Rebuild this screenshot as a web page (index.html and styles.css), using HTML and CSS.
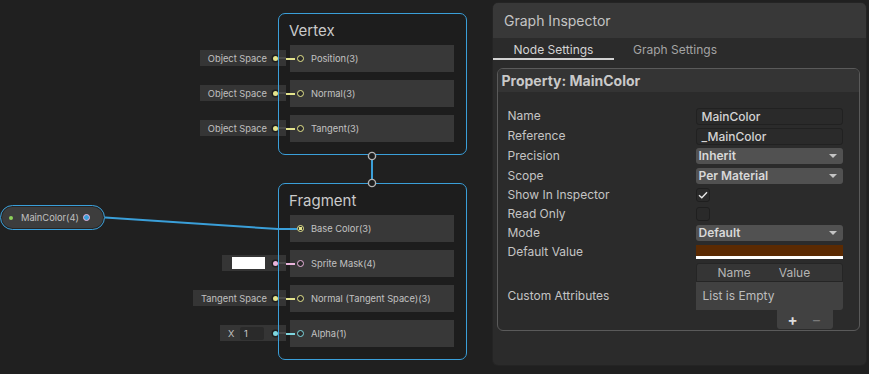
FILE: index.html
```html
<!DOCTYPE html>
<html lang="en">
<head>
    <meta charset="UTF-8">
    <meta name="viewport" content="width=device-width, initial-scale=1.0">
    <title>Shader Graph</title>
    <link rel="stylesheet" href="styles.css">
</head>
<body>
    <div class="graph">
        <!-- Property node -->
        <div class="prop-node">
            <span class="prop-dot"></span>
            <span class="prop-name">MainColor(4)</span>
            <span class="prop-port"></span>
        </div>

        <!-- Vertex block -->
        <div class="node node-vertex">
            <div class="node-title">Vertex</div>
            <div class="slot">
                <div class="input"><span>Object Space</span><i class="dot yellow"></i></div>
                <span class="wire yellow"></span>
                <span class="port yellow"></span>Position(3)
            </div>
            <div class="slot">
                <div class="input"><span>Object Space</span><i class="dot yellow"></i></div>
                <span class="wire yellow"></span>
                <span class="port yellow"></span>Normal(3)
            </div>
            <div class="slot">
                <div class="input"><span>Object Space</span><i class="dot yellow"></i></div>
                <span class="wire yellow"></span>
                <span class="port yellow"></span>Tangent(3)
            </div>
        </div>

        <!-- Fragment block -->
        <div class="node node-fragment">
            <div class="node-title">Fragment</div>
            <div class="slot">
                <span class="port yellow linked"></span>Base Color(3)
            </div>
            <div class="slot">
                <div class="input input-swatch"><span class="swatch"></span><i class="dot pink"></i></div>
                <span class="wire pink"></span>
                <span class="port pink"></span>Sprite Mask(4)
            </div>
            <div class="slot">
                <div class="input"><span>Tangent Space</span><i class="dot yellow"></i></div>
                <span class="wire yellow"></span>
                <span class="port yellow"></span>Normal (Tangent Space)(3)
            </div>
            <div class="slot">
                <div class="input input-float"><span class="axis">X</span><span class="num">1</span><i class="dot cyan"></i></div>
                <span class="wire cyan"></span>
                <span class="port cyan"></span>Alpha(1)
            </div>
        </div>

        <svg class="wires" width="493" height="374" viewBox="0 0 493 374">
            <path d="M105 217.5 L278 229 L297 229" fill="none" stroke="#3a9fd9" stroke-width="2"/>
            <line x1="372" y1="156" x2="372" y2="183" stroke="#3a9fd9" stroke-width="2"/>
            <circle cx="372" cy="156" r="3.6" fill="#1d1d1d" stroke="#b4b4b4" stroke-width="1.4"/>
            <circle cx="372" cy="183" r="3.6" fill="#1d1d1d" stroke="#b4b4b4" stroke-width="1.4"/>
        </svg>
    </div>

    <aside class="inspector">
        <div class="insp-title">Graph Inspector</div>
        <div class="tabs">
            <div class="tab active">Node Settings</div>
            <div class="tab">Graph Settings</div>
        </div>

        <section class="prop">
            <h2>Property: MainColor</h2>
            <div class="fields">
                <div class="row">
                    <label>Name</label>
                    <div class="text-field">MainColor</div>
                </div>
                <div class="row">
                    <label>Reference</label>
                    <div class="text-field">_MainColor</div>
                </div>
                <div class="row">
                    <label>Precision</label>
                    <div class="dropdown">Inherit</div>
                </div>
                <div class="row">
                    <label>Scope</label>
                    <div class="dropdown">Per Material</div>
                </div>
                <div class="row short">
                    <label>Show In Inspector</label>
                    <div class="check">
                        <svg width="10" height="8" viewBox="0 0 10 8"><path d="M1 4.2 L3.8 6.8 L9 1.2" fill="none" stroke="#e6e6e6" stroke-width="1.4"/></svg>
                    </div>
                </div>
                <div class="row short">
                    <label>Read Only</label>
                    <div class="check"></div>
                </div>
                <div class="row">
                    <label>Mode</label>
                    <div class="dropdown">Default</div>
                </div>
                <div class="row short">
                    <label>Default Value</label>
                    <div class="color-field"></div>
                </div>
                <div class="row list-row">
                    <label>Custom Attributes</label>
                    <div class="list">
                        <div class="list-head"><span>Name</span><span>Value</span></div>
                        <div class="list-body">List is Empty</div>
                        <div class="list-foot"><span class="add">+</span><span class="remove">&minus;</span></div>
                    </div>
                </div>
            </div>
        </section>
    </aside>
</body>
</html>
```

FILE: styles.css
```css
body {
    margin: 0;
    background: #202020;
    font-family: Inter, "Noto Sans", sans-serif;
    display: flex;
    height: 374px;
    overflow: hidden;
}

/* graph canvas */
.graph {
    position: relative;
    flex: 0 0 493px;
    height: 374px;
    overflow: hidden;
}
.wires {
    position: absolute;
    left: 0;
    top: 0;
    z-index: 3;
    pointer-events: none;
}
.node {
    position: absolute;
    left: 278px;
    width: 189px;
    box-sizing: border-box;
    padding: 0 13px 13px 12px;
    background: #1d1d1d;
    border-radius: 7px;
}
.node::after {
    content: "";
    position: absolute;
    left: 0;
    top: 0;
    right: 0;
    bottom: 0;
    border: 1px solid #3a9fd9;
    border-radius: 7px;
    z-index: 2;
    pointer-events: none;
}
.node-vertex { top: 13px; }
.node-fragment { top: 183px; }
.node-title {
    padding: 4px 0 0 11px;
    height: 32px;
    box-sizing: border-box;
    line-height: 28px;
    font-size: 15px;
    color: #cacaca;
    margin-left: -12px;
}
.slot {
    position: relative;
    height: 27px;
    margin-bottom: 8px;
    background: #383838;
    display: flex;
    align-items: center;
    padding-left: 21px;
    font-size: 9.3px;
    color: #c2c2c2;
}
.slot:last-child { margin-bottom: 0; }

.port {
    position: absolute;
    left: 7px;
    top: 10px;
    width: 7px;
    height: 7px;
    box-sizing: border-box;
    border: 1.5px solid;
    border-radius: 50%;
    background: #2a2a2a;
}
.port.linked { background: radial-gradient(circle, #e4e48c 0 1.6px, #2a2a2a 2px); }
.port.yellow { border-color: #e4e48c; }
.port.pink { border-color: #eab4dc; }
.port.cyan { border-color: #7ed6df; }

.wire {
    position: absolute;
    left: -4px;
    top: 12.5px;
    width: 9px;
    height: 2px;
}
.wire.yellow { background: #e4e48c; }
.wire.pink { background: #eab4dc; }
.wire.cyan { background: #7ed6df; }

.input {
    position: absolute;
    right: calc(100% + 4px);
    top: 5px;
    height: 16px;
    box-sizing: border-box;
    padding: 0 19px 0 8px;
    background: #353535;
    display: flex;
    align-items: center;
    white-space: nowrap;
    font-size: 9.3px;
    color: #c0c0c0;
    z-index: 1;
}
.input::after {
    content: "";
    position: absolute;
    right: 0;
    top: 7px;
    width: 8px;
    height: 2px;
    background: #4a4a4a;
}
.dot {
    position: absolute;
    right: 8px;
    top: 5.5px;
    width: 5px;
    height: 5px;
    border-radius: 50%;
    box-shadow: 0 0 0 1.5px #1e1e1e;
}
.dot.yellow { background: #e4e48c; }
.dot.pink { background: #eab4dc; }
.dot.cyan { background: #7ed6df; }

.input-swatch { padding-left: 10px; width: 64px; }
.swatch {
    display: block;
    width: 33px;
    height: 12px;
    background: #ffffff;
}
.input-float { padding-left: 8px; width: 66px; }
.axis { width: 12px; }
.num {
    width: 20px;
    height: 13px;
    line-height: 13px;
    padding-left: 4px;
    background: #2a2a2a;
    border-radius: 2px;
    color: #c8c8c8;
}

.prop-node {
    position: absolute;
    left: 0;
    top: 205px;
    width: 105px;
    height: 25px;
    box-sizing: border-box;
    border: 1px solid #3a9fd9;
    border-radius: 13px;
    background: #3d3d3d;
    box-shadow: inset 0 0 0 1px #252525;
    display: flex;
    align-items: center;
    font-size: 9.3px;
    color: #c0c0c0;
}
.prop-dot {
    width: 4px;
    height: 4px;
    border-radius: 50%;
    background: #8ed25a;
    margin: 0 8px 0 8px;
}
.prop-name { flex: 1; }
.prop-port {
    width: 7px;
    height: 7px;
    box-sizing: border-box;
    border: 1.5px solid #eab4dc;
    border-radius: 50%;
    background: #3a9fd9;
    margin-right: 14px;
}

/* inspector panel */
.inspector {
    width: 373px;
    margin: 3px 2px 9px 0;
    background: #2b2b2b;
    border-radius: 5px;
    box-shadow: 0 0 0 1px #242424;
    overflow: hidden;
}
.insp-title {
    height: 35px;
    line-height: 35px;
    padding-left: 11px;
    background: #383838;
    font-size: 14px;
    color: #c4c4c4;
}
.tabs {
    display: flex;
    height: 22px;
}
.tab {
    width: 122px;
    box-sizing: border-box;
    padding-top: 3px;
    line-height: 17px;
    text-align: center;
    font-size: 12px;
    color: #a4a4a4;
    border-bottom: 2px solid transparent;
}
.tab.active {
    color: #d4d4d4;
    border-bottom-color: #d2d2d2;
    width: 121px;
}

.prop {
    margin: 8px 6px 0 3.5px;
    border: 1px solid #5a5a5a;
    border-radius: 6px;
    padding-bottom: 1px;
    overflow: hidden;
}
.prop h2 {
    margin: 0;
    height: 23px;
    line-height: 24px;
    padding-left: 4px;
    background: #343434;
    font-size: 14px;
    font-weight: 700;
    color: #c9c9c9;
}
.fields { padding: 14px 0 0 10px; }
.row {
    display: grid;
    grid-template-columns: 188px 147px;
    align-items: center;
    height: 20px;
}
.row.short { height: 18.5px; }
.row label {
    font-size: 12px;
    color: #c4c4c4;
    margin-top: -1px;
}
.text-field {
    height: 17px;
    box-sizing: border-box;
    padding-left: 5px;
    line-height: 15px;
    background: #2a2a2a;
    border: 1px solid #212121;
    border-radius: 3px;
    font-size: 12px;
    font-weight: 500;
    color: #d4d4d4;
}
.dropdown {
    position: relative;
    height: 16px;
    line-height: 16px;
    padding-left: 3px;
    background: #515151;
    border-radius: 3px;
    font-size: 12px;
    font-weight: 600;
    color: #d8d8d8;
}
.dropdown::after {
    content: "";
    position: absolute;
    right: 6px;
    top: 6px;
    border-left: 4px solid transparent;
    border-right: 4px solid transparent;
    border-top: 4px solid #c4c4c4;
}
.check {
    width: 14px;
    height: 14px;
    box-sizing: border-box;
    background: #2a2a2a;
    border: 1px solid #1f1f1f;
    border-radius: 3px;
    display: flex;
    align-items: center;
    justify-content: center;
}
.color-field {
    height: 14px;
    box-sizing: border-box;
    background: #5b2a02;
    border-bottom: 3px solid #ffffff;
}
.list-row {
    height: 67px;
    margin-top: 0.5px;
}
.list { font-size: 12px; }
.list-head {
    height: 19px;
    line-height: 18px;
    box-sizing: border-box;
    padding-left: 21px;
    display: flex;
    gap: 28px;
    background: #353535;
    border: 1px solid #252525;
    border-radius: 3px 3px 0 0;
    color: #b4b4b4;
}
.list-body {
    height: 28px;
    line-height: 28px;
    padding-left: 7px;
    background: #414141;
    border-radius: 0 0 3px 0;
    color: #bdbdbd;
}
.list-foot {
    width: 56px;
    height: 19px;
    margin: 0 10px 0 auto;
    background: #414141;
    border-radius: 0 0 3px 3px;
    display: flex;
    align-items: center;
    justify-content: space-around;
    padding: 0 4px;
    box-sizing: border-box;
    font-size: 15px;
    line-height: 19px;
}
.add { color: #dcdcdc; font-weight: 700; }
.remove { color: #7a7a7a; }
```
